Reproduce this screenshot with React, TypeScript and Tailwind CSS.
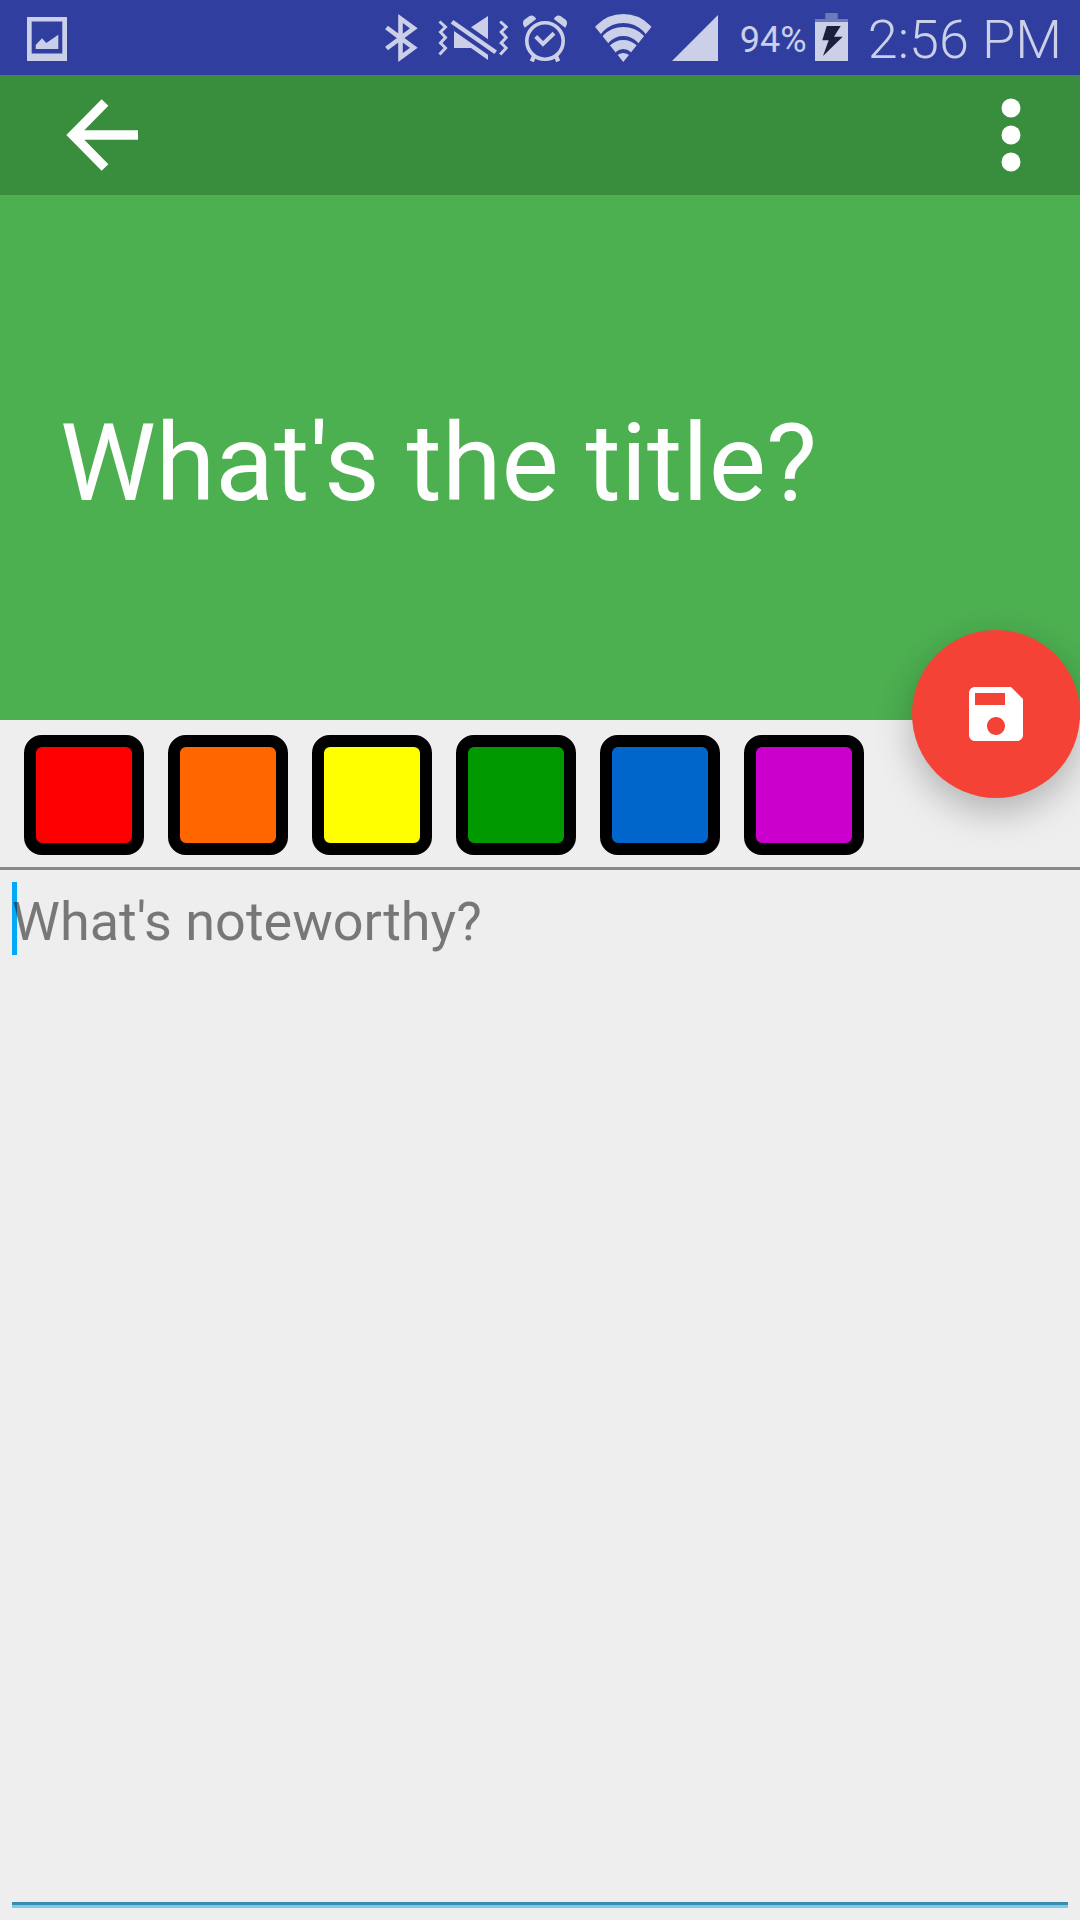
import React from "react";

const swatches = [
  { name: "Red", color: "bg-[#ff0000]" },
  { name: "Orange", color: "bg-[#ff6600]" },
  { name: "Yellow", color: "bg-[#ffff00]" },
  { name: "Green", color: "bg-[#009900]" },
  { name: "Blue", color: "bg-[#0066cc]" },
  { name: "Purple", color: "bg-[#cc00cc]" },
];

function PictureIcon() {
  return (
    <svg viewBox="27 12 40 50" className="h-[50px] w-10" fill="currentColor" aria-hidden="true">
      <path fillRule="evenodd" d="M27 16H67V60H27ZM31.7 20.5V52.5H62.3V20.5Z" />
      <path d="M35.7 44 42 37.3 46.3 42 58.3 33.7V48H35.7Z" />
    </svg>
  );
}

function BluetoothIcon() {
  return (
    <svg viewBox="384 12 39 50" className="h-[50px] w-[39px]" fill="none" stroke="currentColor" strokeWidth="4.6" aria-hidden="true">
      <path d="M386.500 26.500 413.8 46.8 400.5 56.5V17.5L413.8 27.3 386.500 47.500" />
    </svg>
  );
}

function MuteVibrateIcon() {
  return (
    <svg viewBox="437 12 71 50" className="h-[50px] w-[71px]" fill="currentColor" aria-hidden="true">
      <g fill="none" stroke="currentColor" strokeWidth="3">
        <path d="M439.5 20.5 445.5 26 440.5 31 445.5 36.5 440.5 42 445.5 47 439.5 53.5" />
        <path d="M500.2 20.5 506.2 26 501.2 31 506.2 36.5 501.2 42 506.2 47 500.2 53.5" />
        <path strokeWidth="4.4" d="M452 20.7 495.7 51.3" />
      </g>
      <path d="M471 26.3 488 15V38.3Z" />
      <path d="M454 30 488 53.7V59L471 47H454Z" />
    </svg>
  );
}

function AlarmIcon() {
  return (
    <svg viewBox="522 12 46 50" className="h-[50px] w-[46px]" fill="currentColor" aria-hidden="true">
      <g fill="none" stroke="currentColor">
        <circle cx="545" cy="40" r="18.2" strokeWidth="3.6" />
        <path strokeWidth="4" d="M535.7 35.5 543 43 554 32.3" />
        <path strokeWidth="4.4" d="M534.5 54 531.8 60.3M555.5 54 558.2 60.3" />
      </g>
      <path d="M524.8 26.8Q521.5 22 524 19L529.5 15Q533.500 13 536.200 18Z" />
      <path d="M565.2 26.8Q568.5 22 566 19L560.5 15Q556.500 13 553.800 18Z" />
    </svg>
  );
}

function WifiIcon() {
  return (
    <svg viewBox="594 12 58 50" className="h-[50px] w-[58px]" aria-hidden="true">
      <clipPath id="wifi-wedge">
        <path d="M623.3 61 595 25.700V12H651.600V25.700Z" />
      </clipPath>
      <g clipPath="url(#wifi-wedge)" fill="none" stroke="currentColor" strokeWidth="9">
        <circle cx="623.3" cy="50.3" r="32.8" />
        <circle cx="623.3" cy="54.2" r="23.7" />
        <circle cx="623.3" cy="58" r="14.6" />
        <circle cx="623.3" cy="61.500" r="9.500" fill="currentColor" stroke="none" />
      </g>
    </svg>
  );
}

function SignalIcon() {
  return (
    <svg viewBox="672 12 46 50" className="h-[50px] w-[46px]" fill="currentColor" aria-hidden="true">
      <path d="M672 60 718 14V60Z" />
    </svg>
  );
}

function BatteryIcon() {
  return (
    <svg viewBox="815 12 33 50" className="h-[50px] w-[33px]" fill="currentColor" aria-hidden="true">
      <path className="text-[#6f78bd]" d="M825.3 12H837.7V18H848V21H815V18H825.3Z" />
      <path d="M815 21H848V60H815Z" />
      <path className="text-[#1b1f3b]" d="M826.7 25H840.700L834 35.700H842.700L823 55 828.700 39.300H822.300Z" />
    </svg>
  );
}

export default function App() {
  return (
    <div className="flex min-h-screen flex-col bg-[#eeeeee] font-[Roboto,sans-serif]">
      <div className="flex h-[75px] items-center bg-[#303f9f] pr-[18px] pl-[27px] text-[#cbcfe7]">
        <PictureIcon />
        <div className="ml-auto flex items-center gap-3.5">
          <BluetoothIcon />
          <MuteVibrateIcon />
          <AlarmIcon />
        </div>
        <div className="ml-[26px] flex items-center gap-5">
          <WifiIcon />
          <SignalIcon />
        </div>
        <span className="ml-[22px] pt-1 text-[36px] leading-10">94%</span>
        <span className="ml-2">
          <BatteryIcon />
        </span>
        <span className="ml-5 pt-1 text-[54px] leading-[64px] font-light">2:56 PM</span>
      </div>

      <nav className="flex h-[120px] items-center justify-between bg-[#388e3c] pr-[45px] pl-[54px] text-white">
        <button type="button" aria-label="Back">
          <svg viewBox="0 0 96 96" className="size-24" fill="none" stroke="currentColor" strokeWidth="9.500">
            <path d="M51 15.500 19 48 51 80.500M19 48H84" />
          </svg>
        </button>
        <button type="button" aria-label="More options">
          <svg viewBox="0 0 48 96" className="h-24 w-12" fill="currentColor">
            <circle cx="24" cy="21" r="9.5" />
            <circle cx="24" cy="48" r="9.5" />
            <circle cx="24" cy="75" r="9.5" />
          </svg>
        </button>
      </nav>

      <header className="relative flex h-[525px] items-center bg-[#4caf50] px-[60px] pt-[10px]">
        <input
          type="text"
          aria-label="Title"
          placeholder="What's the title?"
          className="h-32 w-full bg-transparent text-[108px] leading-[128px] text-white outline-none placeholder:text-white placeholder:opacity-100"
        />
        <button
          type="button"
          aria-label="Save"
          className="absolute right-0 -bottom-[78px] z-10 flex size-[168px] items-center justify-center rounded-full bg-[#f44336] text-white shadow-[0_14px_36px_rgba(0,0,0,0.25)]"
        >
          <svg viewBox="0 0 24 24" className="size-[72px]" fill="currentColor">
            <path d="M17 3H5c-1.110 0-2 .9-2 2v14c0 1.100.89 2 2 2h14c1.100 0 2-.9 2-2V7l-4-4zm-5 16c-1.660 0-3-1.340-3-3s1.340-3 3-3 3 1.340 3 3-1.340 3-3 3zm3-10H5V5h10v4z" />
          </svg>
        </button>
      </header>

      <div className="flex gap-6 border-b-3 border-[#888888] px-6 pt-[15px] pb-3">
        {swatches.map((s) => (
          <button
            key={s.name}
            type="button"
            aria-label={s.name}
            className={`size-[120px] rounded-[18px] border-12 border-black ${s.color}`}
          />
        ))}
      </div>

      <main className="relative flex flex-1 flex-col p-3">
        <span className="absolute top-3 left-3 h-[73px] w-[5px] bg-[#03a9f4]" aria-hidden="true" />
        <textarea
          aria-label="Note"
          placeholder="What's noteworthy?"
          className="relative w-full flex-1 resize-none bg-transparent pt-2 text-[54px] leading-[64px] text-[#212121] outline-none placeholder:text-black/50 placeholder:opacity-100"
        />
        <div className="h-[6px] border-t-3 border-[#3a8bb0] bg-[#7acbf0]" />
      </main>
    </div>
  );
}
